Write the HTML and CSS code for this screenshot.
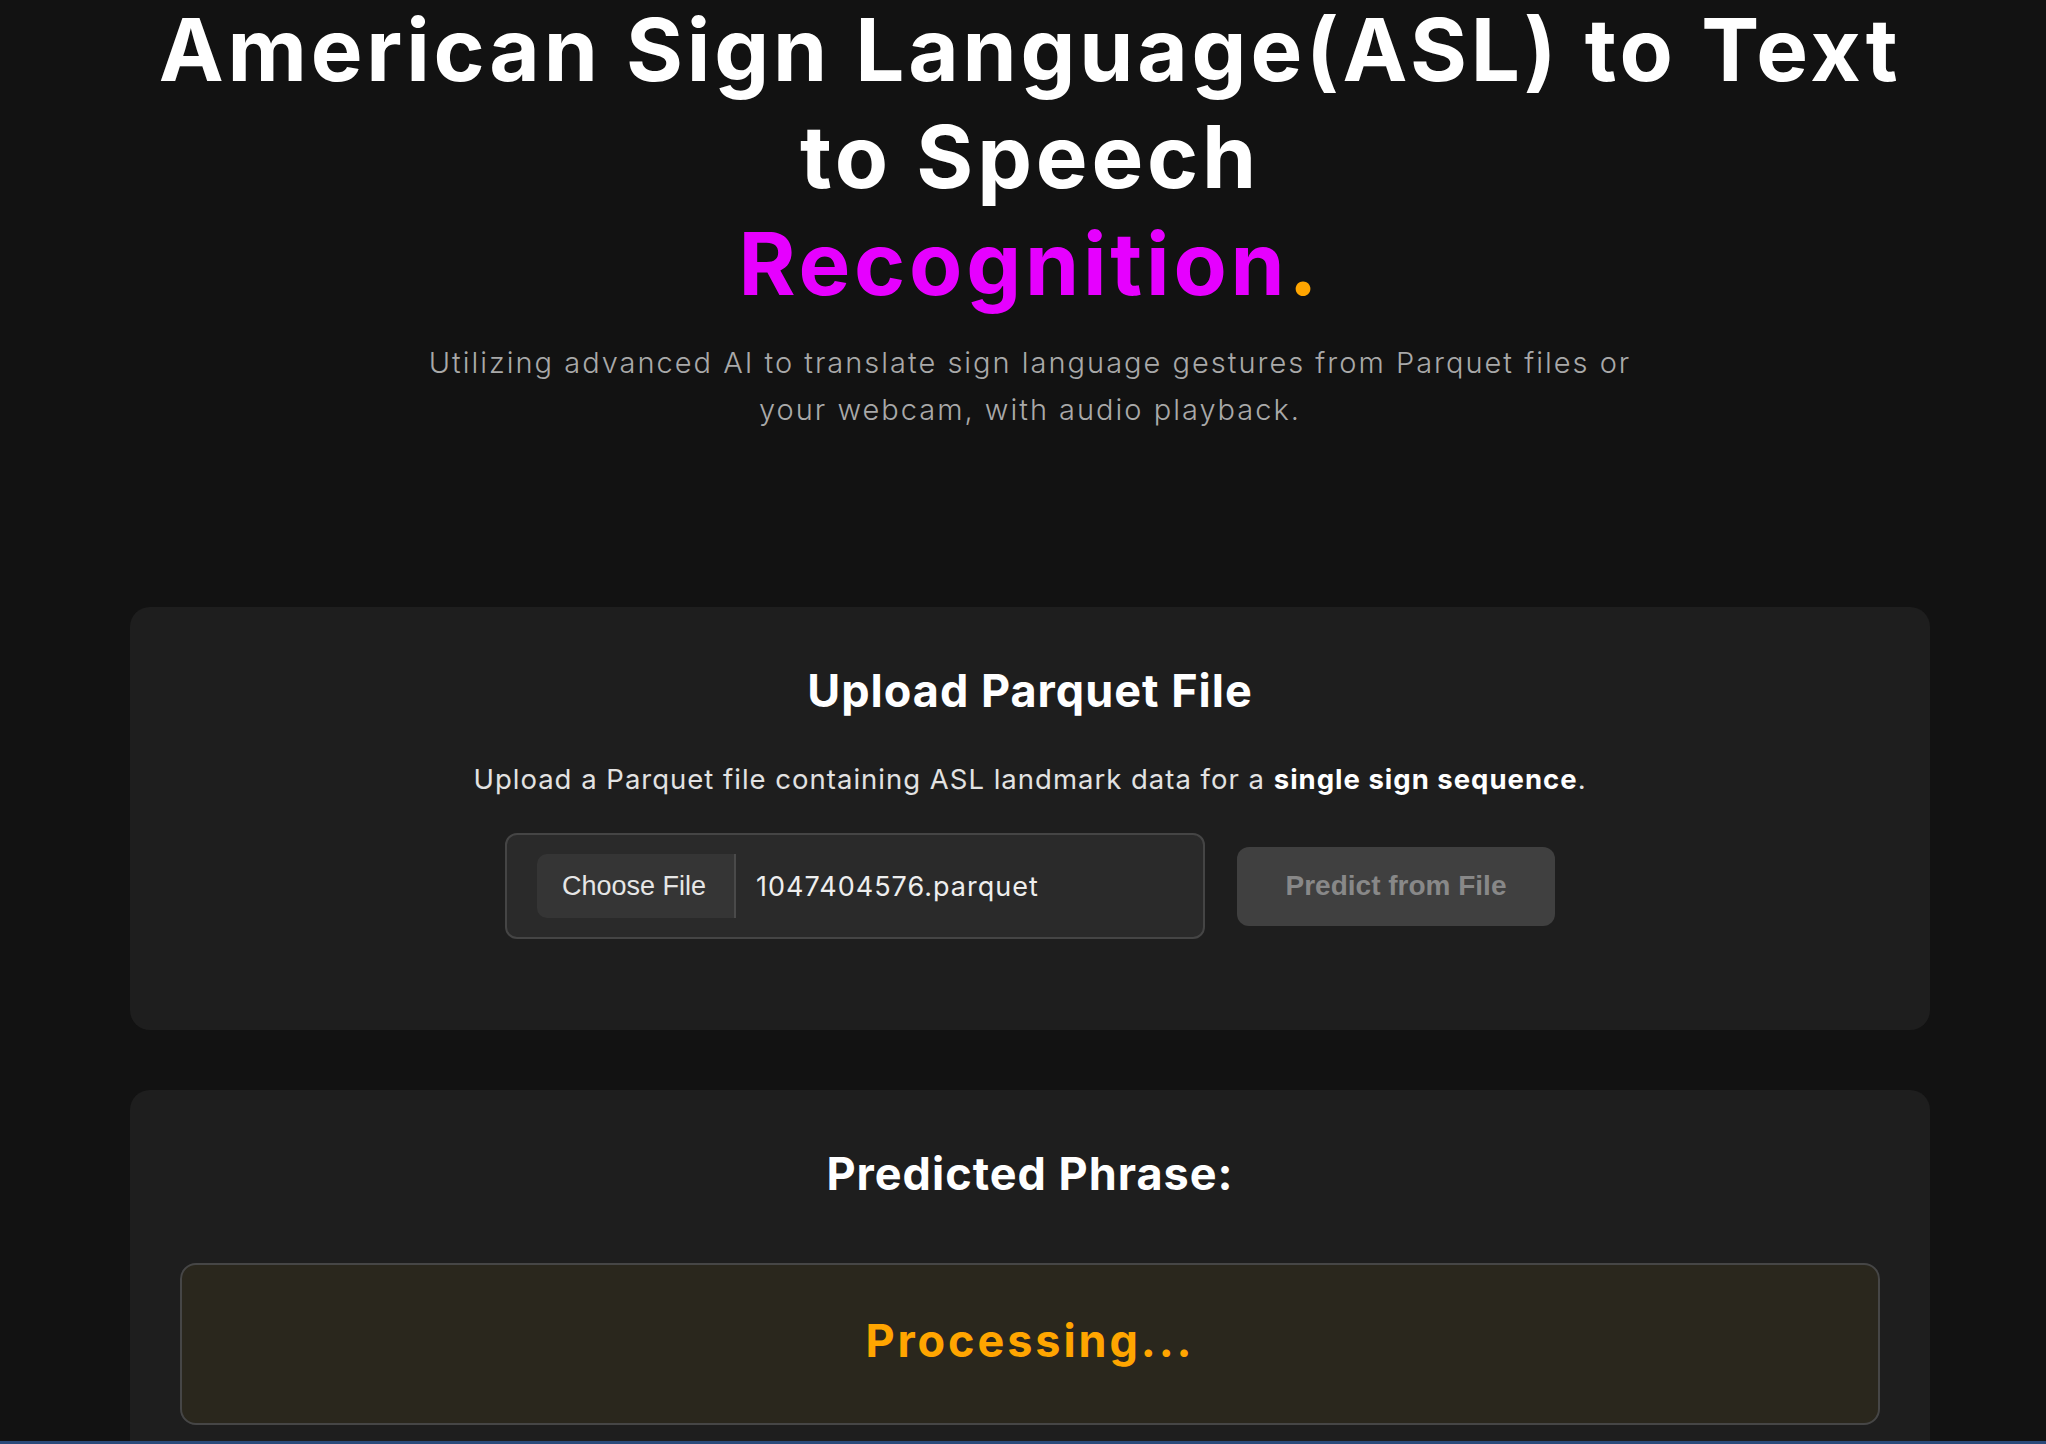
FILE: index.html
```html
<!DOCTYPE html>
<html lang="en">
<head>
<meta charset="utf-8">
<title>ASL to Text to Speech Recognition</title>
<link rel="stylesheet" href="styles.css">
</head>
<body>
<main class="page">
  <header class="hero">
    <h1 class="hero-title">American Sign Language(ASL) to Text to Speech <span class="hero-accent">Recognition<span class="hero-dot">.</span></span></h1>
    <p class="hero-sub">Utilizing advanced AI to translate sign language gestures from Parquet files or your webcam, with audio playback.</p>
  </header>

  <section class="card card-upload">
    <h2 class="card-title">Upload Parquet File</h2>
    <p class="card-desc">Upload a Parquet file containing ASL landmark data for a <strong>single sign sequence</strong>.</p>
    <div class="upload-row">
      <div class="file-box">
        <span class="file-btn">Choose File</span>
        <span class="file-name">1047404576.parquet</span>
      </div>
      <button class="predict-btn" type="button" disabled>Predict from File</button>
    </div>
  </section>

  <section class="card card-result">
    <h2 class="card-title result-title">Predicted Phrase:</h2>
    <div class="result-box">
      <span class="result-text">Processing...</span>
    </div>
  </section>
</main>
<div class="bottom-bar"></div>
</body>
</html>
```

FILE: styles.css
```css
* { box-sizing: border-box; }

html, body {
  margin: 0;
  background: #121212;
}

body {
  padding-left: 14px;
  font-family: Inter, "Open Sans", "Liberation Sans", sans-serif;
  color: #fff;
}

.page {
  width: 1800px;
  margin: 0 auto;
  padding-bottom: 80px;
}

.hero {
  text-align: center;
  margin-bottom: 174px;
}

.hero-title {
  margin: -4px 0 0;
  font-size: 87px;
  line-height: 107px;
  font-weight: 700;
  color: #ffffff;
  letter-spacing: 3.8px;
}

.hero-accent {
  display: block;
  color: #e600ff;
}

.hero-dot {
  color: #ffa500;
}

.hero-sub {
  max-width: 1240px;
  margin: 22px auto 0;
  font-size: 29px;
  line-height: 47px;
  font-weight: 300;
  letter-spacing: 2px;
  color: #a9a9a9;
}

.card {
  background: #1e1e1e;
  border-radius: 20px;
  padding: 57px 50px 91px;
  text-align: center;
}

.card-result {
  margin-top: 60px;
  padding-bottom: 50px;
}

.card-title {
  margin: 0 0 41px;
  font-size: 45px;
  line-height: 54px;
  font-weight: 700;
  letter-spacing: 1px;
  color: #ffffff;
}

.result-title {
  margin-bottom: 62px;
}

.card-desc {
  margin: 0 0 33px;
  font-size: 27.5px;
  line-height: 41px;
  font-weight: 400;
  letter-spacing: 1px;
  color: #e2e2e2;
}

.card-desc strong {
  font-weight: 700;
  color: #ffffff;
}

.upload-row {
  display: flex;
  justify-content: center;
  align-items: center;
  gap: 32px;
}

.file-box {
  width: 700px;
  height: 106px;
  display: flex;
  align-items: center;
  padding: 0 30px;
  background: #2a2a2a;
  border: 2px solid #454545;
  border-radius: 12px;
}

.file-btn {
  height: 64px;
  display: flex;
  align-items: center;
  padding: 0 28px 0 25px;
  background: #353535;
  border-right: 2px solid #4a4a4a;
  border-radius: 10px 0 0 10px;
  font-family: "Liberation Sans", Arial, sans-serif;
  font-size: 27px;
  color: #e6e6e6;
}

.file-name {
  margin-left: 20px;
  font-size: 27px;
  letter-spacing: 1px;
  color: #eeeeee;
}

.predict-btn {
  width: 318px;
  height: 79px;
  border: 0;
  border-radius: 12px;
  background: #404040;
  color: #888888;
  font-family: "Liberation Sans", Arial, sans-serif;
  font-size: 28px;
  font-weight: 700;
  padding: 0;
}

.result-box {
  border: 2px solid #464646;
  border-radius: 16px;
  background: #2a271d;
  padding: 49px 20px 55px;
}

.result-text {
  display: block;
  font-size: 45px;
  line-height: 54px;
  font-weight: 700;
  letter-spacing: 2.9px;
  color: #ffa500;
}

.bottom-bar {
  position: fixed;
  left: 0;
  right: 0;
  bottom: 0;
  height: 3px;
  background: #2b4a7a;
}
```
